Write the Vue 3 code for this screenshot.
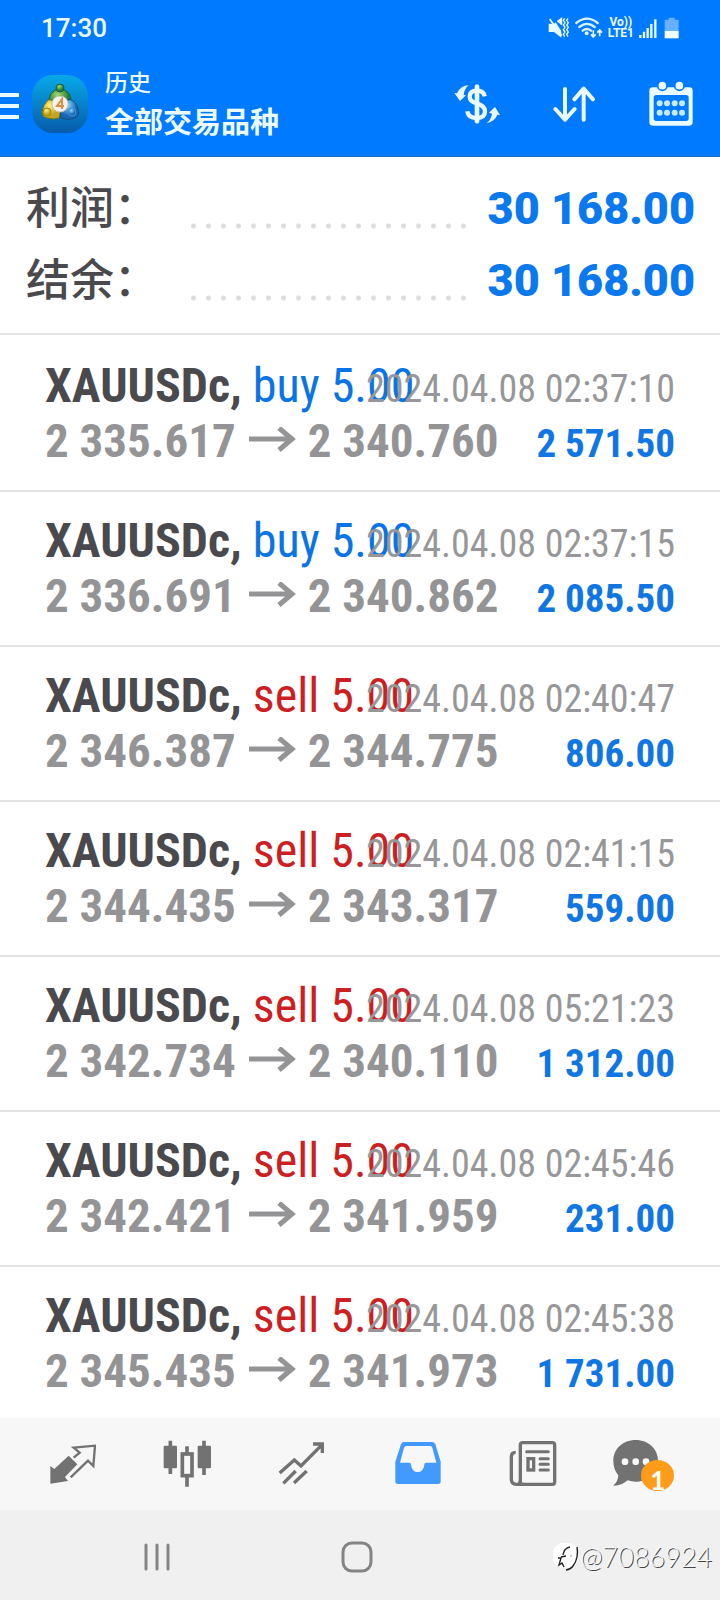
<script setup>
const totals = [
  { label: '利润：', value: '30 168.00' },
  { label: '结余：', value: '30 168.00' },
]
const deals = [
  { side: 'buy', open: '2 335.617', close: '2 340.760', time: '2024.04.08 02:37:10', profit: '2 571.50' },
  { side: 'buy', open: '2 336.691', close: '2 340.862', time: '2024.04.08 02:37:15', profit: '2 085.50' },
  { side: 'sell', open: '2 346.387', close: '2 344.775', time: '2024.04.08 02:40:47', profit: '806.00' },
  { side: 'sell', open: '2 344.435', close: '2 343.317', time: '2024.04.08 02:41:15', profit: '559.00' },
  { side: 'sell', open: '2 342.734', close: '2 340.110', time: '2024.04.08 05:21:23', profit: '1 312.00' },
  { side: 'sell', open: '2 342.421', close: '2 341.959', time: '2024.04.08 02:45:46', profit: '231.00' },
  { side: 'sell', open: '2 345.435', close: '2 341.973', time: '2024.04.08 02:45:38', profit: '1 731.00' },
]
</script>

<template>
  <div class="screen">
    <header class="top">
      <div class="status">
        <span class="clock">17:30</span>
        <div class="indicators">
          <svg width="22" height="22" viewBox="562 48 66 66" aria-hidden="true">
            <path d="M564 68h16l22-17v59l-22-17h-16z" fill="#e8fbff" />
            <path d="M572 44l34 52V44z" fill="#007aff" />
            <path d="M567 54l36 50M590 62l12-9v18" stroke="#e8fbff" stroke-width="5" fill="#e8fbff" />
            <path d="M612 52l-4 6 5 7-5 7 5 7-5 7 5 7-5 7 4 7M622 52l-4 6 5 7-5 7 5 7-5 7 5 7-5 7 4 7" fill="none" stroke="#e8fbff" stroke-width="4" />
          </svg>
          <svg width="28" height="22" viewBox="650 48 84 66" aria-hidden="true">
            <g fill="none" stroke="#d6f4ff" stroke-width="7" stroke-linecap="round">
              <path d="M654 66q32-26 64 0M663 78q23-19 46 0M673 89q13-10 25 0" />
            </g>
            <circle cx="685" cy="97" r="6" fill="#d6f4ff" />
            <path d="M705 88v19m-7-7l7 8 7-8M724 106v-18m-7 7l7-8 7 8" fill="none" stroke="#e8fbff" stroke-width="5" />
          </svg>
          <span class="carrier"><span>Vo))</span><span>LTE1</span></span>
          <svg width="18" height="22" viewBox="836 48 54 66" aria-hidden="true">
            <path d="M840 102v9M851 92v19M862 81v30M873 69v42M885 55v56" stroke="#e8fbff" stroke-width="7" />
          </svg>
          <svg class="battery" width="16" height="22" viewBox="913 48 48 66" aria-hidden="true">
            <path d="M927 50h18v6h12v34h-42V56h12z" fill="#66b0ff" />
            <path d="M915 90h42v22h-42z" fill="#f4ffff" />
          </svg>
        </div>
      </div>
      <div class="appbar">
        <button class="menu" type="button" aria-label="菜单"><i></i><i></i><i></i></button>
        <svg class="logo" width="58" height="60" viewBox="0 0 58 60" aria-hidden="true">
          <defs>
            <linearGradient id="bg" x1="0" y1="0" x2="0" y2="1"><stop offset="0" stop-color="#08a9e8" /><stop offset="1" stop-color="#075bab" /></linearGradient>
            <radialGradient id="gr" cx=".4" cy=".3"><stop offset="0" stop-color="#a5d86a" /><stop offset="1" stop-color="#257d35" /></radialGradient>
            <radialGradient id="ye" cx=".4" cy=".3"><stop offset="0" stop-color="#fff27a" /><stop offset="1" stop-color="#c4a51e" /></radialGradient>
            <radialGradient id="bl" cx=".4" cy=".3"><stop offset="0" stop-color="#8fd8ff" /><stop offset="1" stop-color="#1767b5" /></radialGradient>
          </defs>
          <rect x="1" y="1" width="56" height="58" rx="21" fill="url(#bg)" />
          <path d="M18 30q-1-14 11-15 12 1 11 15l-5 4q0-11-6-12-6 1-6 12z" fill="url(#gr)" stroke="#175f3b" />
          <circle cx="29" cy="14" r="4" fill="url(#gr)" stroke="#175f3b" />
          <path d="M17 26q-5 5-6 12 0 5 5 6 7 2 12 0l2-7-8-10q-3-2-5-1z" fill="url(#ye)" stroke="#65731f" />
          <circle cx="16" cy="38" r="4" fill="url(#ye)" stroke="#9b861c" />
          <path d="M38 25q7 2 9 10 2 6-3 9-6 3-14 0l-1-7z" fill="url(#bl)" stroke="#104d83" />
          <circle cx="41" cy="38" r="4" fill="url(#bl)" stroke="#3f96d3" />
          <circle cx="29" cy="30" r="8" fill="#f6f3ee" stroke="#c9c4ba" />
          <path d="M31 35v-10l-5 7h7" fill="none" stroke="#df8f45" stroke-width="2" />
        </svg>
        <div class="titles">
          <span class="sub">历史</span>
          <h1>全部交易品种</h1>
        </div>
        <div class="actions">
          <button type="button" aria-label="货币">
            <svg width="48" height="48" viewBox="280 241 144 144" fill="none" stroke="#eafaff">
              <path d="M375 290q-3-17-23-17-22 0-22 18 0 14 21 20 25 7 25 24 0 20-25 20-26 0-28-20" stroke-width="13" />
              <path d="M352 261v104" stroke-width="14" stroke-linecap="round" />
              <path d="M284 280l8 1q10-23 35-24-13 10-15 29l7 1-18 17z" fill="#eafaff" stroke="none" />
              <path d="M421 346l-8-1q-7 19-32 26 13-11 16-29l-9-3 18-17z" fill="#eafaff" stroke="none" />
            </svg>
          </button>
          <button type="button" aria-label="排序">
            <svg width="48" height="48" viewBox="571 241 144 144" fill="none" stroke="#eafaff" stroke-width="12" stroke-linecap="round" stroke-linejoin="round">
              <path d="M616 268v92M587 328l29 32 29-32M672 360v-92M644 299l28-32 28 32" />
            </svg>
          </button>
          <button type="button" aria-label="日历">
            <svg width="48" height="48" viewBox="860 241 144 144">
              <rect x="867" y="263" width="130" height="115" rx="10" fill="#eafaff" />
              <rect x="880" y="286" width="105" height="78" rx="8" fill="#007aff" />
              <g fill="#eafaff" stroke="#007aff" stroke-width="5"><circle cx="906" cy="258" r="14" /><circle cx="957" cy="258" r="14" /></g>
              <g fill="#c4ecff">
                <circle cx="898" cy="311" r="9" /><circle cx="920" cy="311" r="9" /><circle cx="943" cy="311" r="9" /><circle cx="965" cy="311" r="9" />
                <circle cx="898" cy="339" r="9" /><circle cx="920" cy="339" r="9" /><circle cx="943" cy="339" r="9" /><circle cx="965" cy="339" r="9" />
              </g>
            </svg>
          </button>
        </div>
      </div>
    </header>

    <dl class="totals">
      <div v-for="t in totals" :key="t.label" class="total">
        <dt>{{ t.label }}</dt>
        <span class="leader"></span>
        <dd>{{ t.value }}</dd>
      </div>
    </dl>

    <ul class="deals">
      <li v-for="d in deals" :key="d.time" class="deal">
        <div class="line">
          <span class="name"><b>XAUUSDc,</b> <span :class="d.side">{{ d.side }} 5.00</span></span>
          <time>{{ d.time }}</time>
        </div>
        <div class="line">
          <span class="prices">
            <span>{{ d.open }}</span>
            <svg width="48" height="28" viewBox="0 0 48 28" fill="none" stroke="#949496" stroke-width="5" aria-label="→"><path d="M1 12h43M31 1l13 11-13 11" /></svg>
            <span>{{ d.close }}</span>
          </span>
          <span class="profit">{{ d.profit }}</span>
        </div>
      </li>
    </ul>

    <nav class="tabs">
      <button type="button" aria-label="行情">
        <svg width="48" height="48" viewBox="143 120 144 144">
          <path d="M205 167l26 26-37 38 9 12-53 8v-53l12 9z" fill="#727272" />
          <path d="M220 173l18-15-18-15 64-6-5 61-16-16-52 50" fill="none" stroke="#727272" stroke-width="7" />
        </svg>
      </button>
      <button type="button" aria-label="图表">
        <svg width="48" height="48" viewBox="490 120 144 144">
          <path d="M512 122v100M613 122v103M562 139v23M562 228v32" stroke="#727272" stroke-width="11" />
          <rect x="492" y="137" width="40" height="68" rx="4" fill="#727272" />
          <rect x="594" y="137" width="40" height="68" rx="4" fill="#727272" />
          <rect x="548" y="162" width="29" height="65" fill="none" stroke="#727272" stroke-width="11" />
        </svg>
      </button>
      <button type="button" aria-label="交易">
        <svg width="48" height="48" viewBox="836 120 144 144" fill="none" stroke="#727272" stroke-width="10">
          <path d="M841 219l44-39 20 18 64-65M941 132h28v27M852 250l37-37M884 249l38-36" />
        </svg>
      </button>
      <button type="button" aria-label="历史" aria-current="page">
        <svg width="48" height="48" viewBox="101 120 144 144">
          <path d="M131 126h84q7 0 10 7l16 52v59q0 8-8 8H113q-8 0-8-8v-59l17-52q3-7 9-7z" fill="#429aff" />
          <path d="M137 138h73q4 0 6 5l12 45h-31q-5 0-5 6-3 22-20 22t-20-22q0-6-5-6h-28l12-45q2-5 6-5z" fill="#f7f7f7" />
        </svg>
      </button>
      <button type="button" aria-label="新闻">
        <svg width="48" height="48" viewBox="448 118 144 144" fill="none" stroke="#727272" stroke-width="10">
          <rect x="482" y="126" width="103" height="125" rx="7" />
          <path d="M468 155q-13 0-13 14v67q0 15 15 15h25M482 240q0 11-10 11" />
          <path d="M501 153h65M541 174h25M541 191h25M541 208h25" stroke-width="9" stroke-linecap="round" />
          <rect x="505" y="174" width="17" height="34" />
        </svg>
      </button>
      <button type="button" aria-label="消息">
        <span class="chat">
          <svg width="48" height="48" viewBox="760 120 144 144">
            <path d="M828 120c39 0 67 27 67 62s-28 63-67 63q-13 0-24-4-20 17-43 16 14-12 15-31-15-17-15-44c0-35 28-62 67-62z" fill="#727272" />
            <g fill="#f7f7f7"><circle cx="796" cy="185" r="10" /><circle cx="828" cy="185" r="10" /><circle cx="859" cy="185" r="10" /></g>
          </svg>
          <span class="badge">1</span>
        </span>
      </button>
    </nav>

    <footer class="system">
      <button type="button" aria-label="最近">
        <svg width="32" height="32" viewBox="0 0 32 32" stroke="#848484" stroke-width="3" stroke-linecap="round"><path d="M5 4v24M16 4v24M27 4v24" /></svg>
      </button>
      <button type="button" aria-label="主页">
        <svg width="32" height="32" viewBox="0 0 32 32" fill="none" stroke="#848484" stroke-width="3"><rect x="2" y="2" width="28" height="28" rx="9" /></svg>
      </button>
      <div class="mark">
        <svg width="27" height="30" viewBox="0 0 27 30" aria-hidden="true">
          <rect x="0" y="1" width="25" height="25" rx="10" fill="#fff" />
          <path d="M11 25l-2-4-3 2 2-7H5M8 15l5-1M10 13q1-7 7-8M24 5q2 11-4 19-2 3-7 4" fill="none" stroke="#222" stroke-width="1.4" />
          <path d="M17 14h2" stroke="#999" />
        </svg>
        <span>@7086924</span>
      </div>
    </footer>
  </div>
</template>

<style>
body { background: #fff; }
</style>

<style scoped>
* { box-sizing: border-box; }
.screen {
  height: 100vh;
  display: flex;
  flex-direction: column;
  background: #fff;
  font-family: Roboto, "Noto Sans CJK SC", sans-serif;
}
button { padding: 0; border: 0; background: none; display: flex; align-items: center; justify-content: center; }
svg { display: block; flex: none; }

.top { background: #007aff; color: #eafaff; border-bottom: 1px solid #1c6dc8; }
.status { height: 52px; padding: 3px 40px 0 41px; display: flex; align-items: center; justify-content: space-between; }
.clock { font-size: 26px; font-weight: 500; }
.indicators { display: flex; align-items: center; gap: 5px; }
.carrier { display: flex; flex-direction: column; font-size: 12px; line-height: 11px; font-weight: 700; text-align: center; }
.battery { margin-left: 2px; }

.appbar { height: 104px; padding-right: 25px; display: flex; align-items: center; }
.menu { width: 19px; margin: 3px 12px 0 0; flex-direction: column; gap: 7px; }
.menu i { width: 100%; height: 4px; background: #eafaff; }
.titles { margin-left: 16px; padding-top: 3px; flex: 1; display: flex; flex-direction: column; gap: 3px; }
.sub { font-size: 23px; line-height: 32px; font-weight: 500; }
h1 { margin: 0; font-size: 29px; line-height: 40px; font-weight: 700; }
.actions { display: flex; gap: 49px; }

.totals { margin: 0; padding: 16px 25px 16px 26px; border-bottom: 2px solid #e4e4e4; }
.total { height: 72px; display: flex; align-items: center; }
dt { width: 160px; font-size: 44px; line-height: 72px; font-weight: 500; color: #4a4a4e; }
.leader {
  flex: 1;
  height: 6px;
  margin-top: 34px;
  background: radial-gradient(circle, #dedede 2px, transparent 3px) 0 0 / 15px 6px repeat-x;
}
dd { margin: 0 0 0 14px; font-size: 45px; line-height: 70px; font-weight: 900; color: #0a78ee; }

.deals { flex: 1; min-height: 0; margin: 0; padding: 2px 0 0; overflow: hidden; list-style: none; font-family: "Roboto Condensed", "Liberation Sans Narrow", Roboto, sans-serif; }
.deal { padding: 21px 45px 22px; border-bottom: 2px solid #e2e2e2; }
.line { display: grid; align-items: baseline; line-height: 55px; white-space: nowrap; }
.line > * { grid-area: 1 / 1; }
.name { font-size: 48px; color: #4a4a4e; }
.buy { color: #0a74e6; }
.sell { color: #cc1f24; }
time, .profit { justify-self: end; line-height: 44px; }
time { font-size: 38px; color: #979799; }
.prices { display: flex; align-items: center; gap: 12px; font-size: 47px; font-weight: 700; color: #949496; }
.profit { font-size: 39px; font-weight: 700; color: #0f76e4; }

.tabs { height: 92px; padding: 0 14px; display: grid; grid-template-columns: repeat(6, 1fr); background: #f7f7f7; }
.chat { position: relative; margin-right: 22px; }
.badge {
  position: absolute;
  left: 28px;
  top: 20px;
  width: 33px;
  height: 31px;
  border-radius: 50%;
  overflow: hidden;
  background: #ff9d1b;
  color: #fff;
  font: 700 26px/40px Lato, sans-serif;
  text-align: center;
}

.system { height: 90px; padding: 4px 8px 0 0; display: grid; grid-template-columns: 313px 88px 1fr; align-items: center; background: #f0f0f0; }
.mark { display: flex; align-items: center; justify-content: flex-end; font: 300 27px/32px Lato, sans-serif; color: #fafafa; text-shadow: 1px 1px 0 #444; }
</style>
